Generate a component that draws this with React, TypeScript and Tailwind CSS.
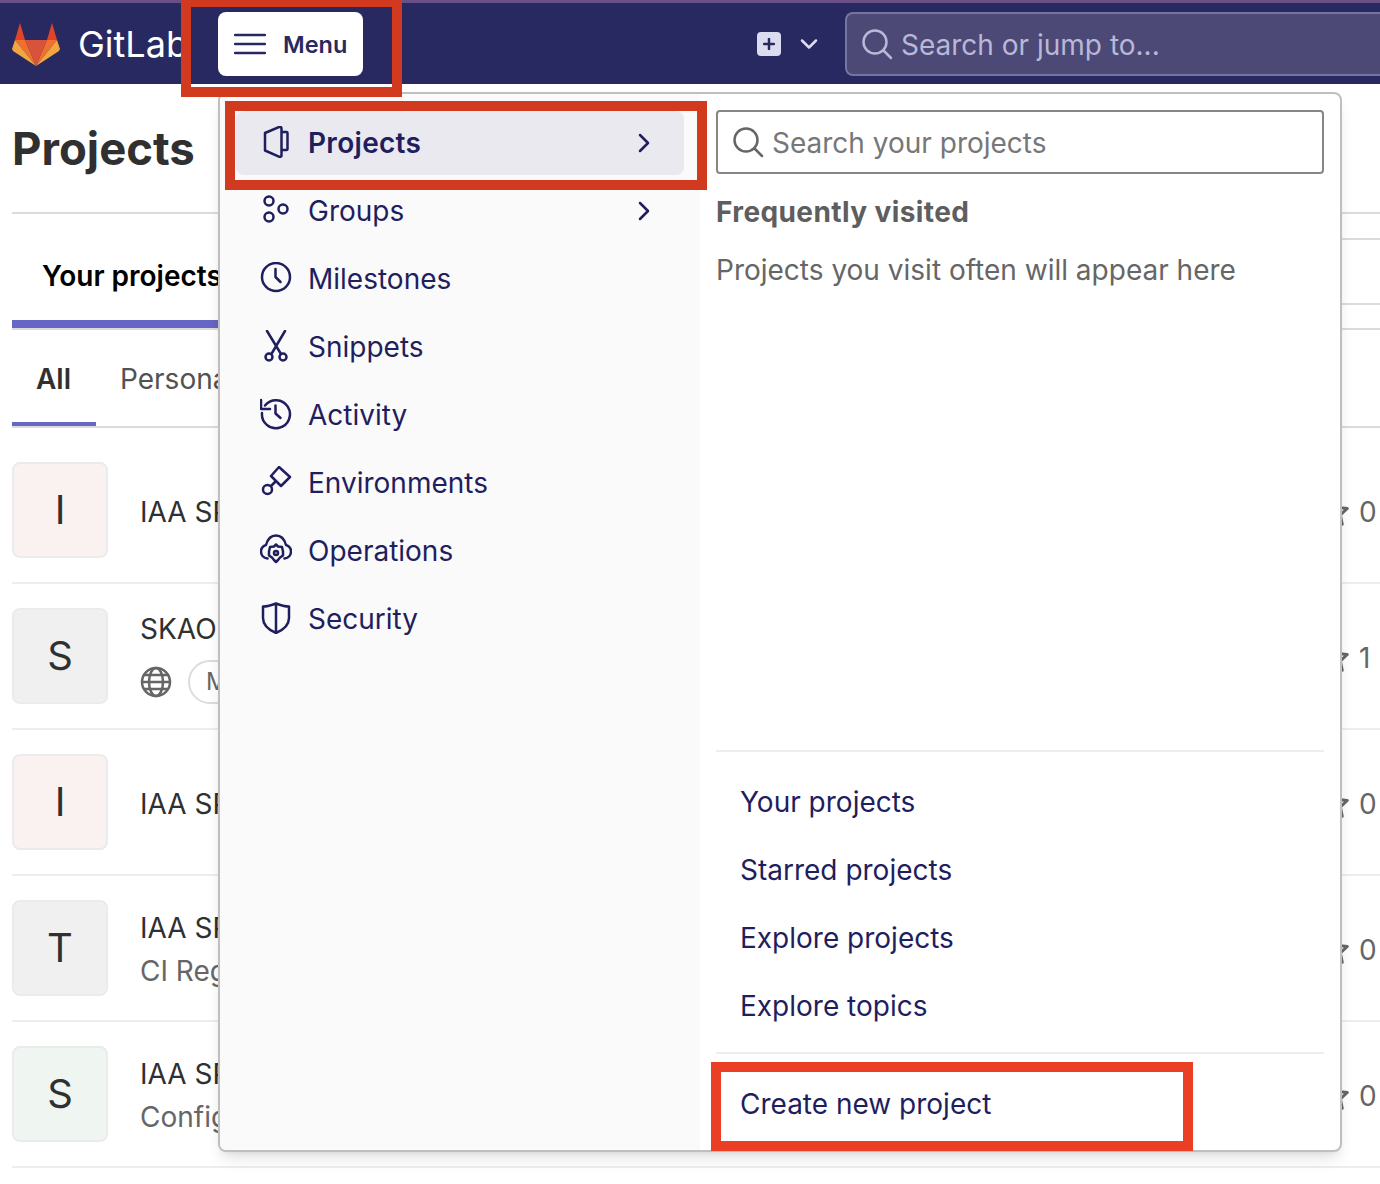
import { ReactNode } from 'react';

const FONT = "font-['Inter','Liberation_Sans',sans-serif]";

function Glyph({ children, className = '' }: { children: ReactNode; className?: string }) {
  return (
    <svg
      viewBox="0 0 32 32"
      fill="none"
      stroke="currentColor"
      strokeWidth={2.5}
      strokeLinecap="round"
      strokeLinejoin="round"
      className={`w-8 h-8 shrink-0 ${className}`}
    >
      {children}
    </svg>
  );
}

function Tanuki() {
  return (
    <svg viewBox="0 0 48 44" className="w-12 h-11 shrink-0">
      <polygon points="8,0 3,17 13,17" fill="#e24329" />
      <polygon points="40,0 45,17 35,17" fill="#e24329" />
      <polygon points="13,17 35,17 24,43" fill="#d9533a" />
      <polygon points="3,17 13,17 24,43" fill="#f0702f" />
      <polygon points="45,17 35,17 24,43" fill="#f0702f" />
      <polygon points="3,17 0,26 1,28 24,43" fill="#f3a640" />
      <polygon points="45,17 48,26 47,28 24,43" fill="#f3a640" />
    </svg>
  );
}

const navIcons: Record<string, ReactNode> = {
  Projects: <path d="M5 7 19.5 0.8c1.600 0 2 1 2 1.600v27c0 .8-.6 1.600-2 1.400L5 24.500ZM21.500 6H26.500c.6 0 1 .5 1 1v16c0 .6-.4 1-1 1H21.500" />,
  Groups: (
    <>
      <circle cx="9" cy="7" r="4.500" />
      <circle cx="9" cy="23" r="4.500" />
      <circle cx="23" cy="15" r="4.500" />
    </>
  ),
  Milestones: (
    <>
      <circle cx="16" cy="15" r="14" />
      <path d="M15.500 7v8l5 5" />
    </>
  ),
  Snippets: (
    <>
      <path d="M7 1 21 24M25 1 12 23" />
      <circle cx="9" cy="27" r="3.500" />
      <circle cx="23" cy="27" r="3.500" />
    </>
  ),
  Activity: (
    <>
      <path d="M5 7.500A14 14 0 1 1 2 15" />
      <path d="M1 2v9h9" />
      <path d="M15.500 7.500v8l5 4.500" />
    </>
  ),
  Environments: (
    <>
      <path d="M19 1 30 11 21 20 11 10Z" />
      <circle cx="7.500" cy="23.500" r="4.500" />
      <path d="M11 20 15 16" />
    </>
  ),
  Operations: (
    <>
      <path d="M7.500 24.500C3.500 24 1 21 1 17.500 1 14.500 3 12 6 11 7.500 5.500 11 1.500 16 1.500s8.500 4 10 9.500c3 1 5 3.500 5 6.500 0 3.500-2.500 6.500-6.500 7" />
      <path d="M16 10.500 18 12.500 22 13 23 17.500 23 21.500 20 23.500 18 26 16 28 14 26 12 23.500 9 21.500 9 17.500 10 13 14 12.500Z" />
      <circle cx="16" cy="19" r="2" />
    </>
  ),
  Security: <path d="M16 1.500C11 3.500 7 4.500 3 4.500V16c0 7 6 12 13 15 7-3 13-8 13-15V4.500c-4 0-8-1-13-3ZM16 1.500V31" />,
};

const navItems = ['Projects', 'Groups', 'Milestones', 'Snippets', 'Activity', 'Environments', 'Operations', 'Security'];
const hasChevron = ['Projects', 'Groups'];

function NavItem({ label }: { label: string }) {
  const active = label === 'Projects';
  return (
    <div className={`h-16 mb-1 ml-4 mr-4 rounded-lg flex items-center pl-6 pr-[34px] ${active ? 'bg-[#e9e9ef] font-semibold tracking-[0.3px]' : ''}`}>
      <Glyph className="-translate-y-px">{navIcons[label]}</Glyph>
      <span className="ml-4 flex-1">{label}</span>
      {hasChevron.includes(label) && (
        <svg viewBox="0 0 12 20" className="w-3 h-5" fill="none" stroke="currentColor" strokeWidth={2.5} strokeLinecap="round" strokeLinejoin="round">
          <path d="M2 2l8 8-8 8" />
        </svg>
      )}
    </div>
  );
}

function Search({ className = '' }: { className?: string }) {
  return (
    <svg viewBox="0 0 32 32" fill="none" stroke="currentColor" strokeWidth={2.5} strokeLinecap="round" className={`w-8 h-8 shrink-0 ${className}`}>
      <circle cx="14" cy="14" r="11.500" />
      <path d="M22.500 22.500 30 30" />
    </svg>
  );
}

type Row = { letter: string; tint: string; name: string; sub?: string; pill?: boolean; stars: number };

const rows: Row[] = [
  { letter: 'I', tint: 'bg-[#faf2f0]', name: 'IAA SPSRC / Infrastructure', stars: 0 },
  { letter: 'S', tint: 'bg-[#f0f0f0]', name: 'SKAO / Maintainer', pill: true, stars: 1 },
  { letter: 'I', tint: 'bg-[#faf2f0]', name: 'IAA SPSRC / Deployments', stars: 0 },
  { letter: 'T', tint: 'bg-[#f0f0f0]', name: 'IAA SPSRC / Test', sub: 'CI Registry images', stars: 0 },
  { letter: 'S', tint: 'bg-[#eff5f0]', name: 'IAA SPSRC / Services', sub: 'Configuration files', stars: 0 },
];

function ProjectRow({ row }: { row: Row }) {
  return (
    <div className="h-[146px] pt-6 border-b-2 border-[#ededed] flex items-start">
      <div className={`w-24 h-24 rounded-lg border-2 border-[#ebebeb] flex items-center justify-center text-[40px] leading-none text-[#303030] ${row.tint}`}>
        {row.letter}
      </div>
      <div className="ml-8 h-24 pt-[3px] flex flex-col justify-center text-[#303030] leading-9">
        <div>{row.name}</div>
        {row.sub && <div className="mt-[7px] text-[#666666]">{row.sub}</div>}
        {row.pill && (
          <div className="mt-[13px] flex items-center h-12">
            <svg viewBox="0 0 32 32" fill="none" stroke="#666666" strokeWidth={2.5} className="w-8 h-8">
              <circle cx="16" cy="16" r="14" />
              <ellipse cx="16" cy="16" rx="7" ry="14" />
              <path d="M2 16h28M4 9h24M4 23h24" />
            </svg>
            <span className="ml-4 h-11 px-4 border-2 border-[#dcdcdc] rounded-full flex items-center text-2xl text-[#666666]">Maintainer</span>
          </div>
        )}
      </div>
      <div className="ml-auto h-24 pt-[3px] pr-1 flex items-center text-[#666666]">
        <svg viewBox="0 0 24 24" fill="none" stroke="#666666" strokeWidth={2.2} strokeLinejoin="round" className="w-8 h-8">
          <path d="M12 2l3 6.600 7 .8-5.200 4.800 1.400 7L12 17.600l-6.200 3.600 1.400-7L2 9.400l7-.8z" />
        </svg>
        <span className="ml-[9px] w-[17px]">{row.stars}</span>
      </div>
    </div>
  );
}

export default function App() {
  return (
    <div className={`relative w-[1380px] h-[1184px] overflow-hidden bg-white text-[28px] ${FONT}`}>
      {/* top bar */}
      <header className="h-[84px] bg-[#292961] border-t-[3px] border-[#6b4f87] flex items-center pt-px">
        <div className="ml-3 translate-y-[1px]">
          <Tanuki />
        </div>
        <span className="ml-[18px] text-[36px] text-white leading-none w-[103px] whitespace-nowrap">GitLab</span>
        <button className="ml-[37px] w-[145px] h-16 bg-white rounded-lg flex items-center pl-4 text-[#292961] text-[23.5px] font-semibold">
          <svg viewBox="0 0 32 32" fill="none" stroke="currentColor" strokeWidth={2.5} strokeLinecap="round" className="w-8 h-8">
            <path d="M1 7h30M1 16h30M1 25h30" />
          </svg>
          <span className="ml-[17px] pt-0.5">Menu</span>
        </button>
        <div className="ml-[394px] w-6 h-6 rounded bg-[#dcdcf0] flex items-center justify-center">
          <svg viewBox="0 0 12 12" stroke="#292961" strokeWidth={2.5} strokeLinecap="round" className="w-3 h-3">
            <path d="M6 1v10M1 6h10" />
          </svg>
        </div>
        <svg viewBox="0 0 18 12" fill="none" stroke="#dcdcf0" strokeWidth={2.5} strokeLinecap="round" strokeLinejoin="round" className="ml-[19px] w-[18px] h-3">
          <path d="M2 2.500l7 7 7-7" />
        </svg>
        <div className="ml-[27px] flex-1 h-16 rounded-l-lg bg-[#4c4977] border-2 border-r-0 border-[#77759f] flex items-center pl-[14px] text-[#b9b8d6]">
          <Search />
          <span className="ml-[8px] pt-px">Search or jump to...</span>
        </div>
      </header>

      {/* page behind the menu */}
      <main className="pl-3 pt-[2px] text-[#303030]">
        <h1 className="h-[128px] border-b-2 border-[#dbdbdb] flex items-center text-[45.5px] font-bold">Projects</h1>
        <div className="h-[116px] flex items-center border-b-2 border-[#dbdbdb]">
          <div className="h-full w-[206px] border-b-[8px] border-[#6666c4] pl-[30px] pt-[18px] flex items-center font-semibold text-black whitespace-nowrap">
            Your projects
          </div>
          <div className="ml-auto w-[500px] h-[67px] border-y-2 border-[#dbdbdb]" />
        </div>
        <div className="h-[98px] flex items-stretch border-b-2 border-[#dbdbdb]">
          <div className="w-[84px] border-b-4 border-[#6666c4] pl-6 pt-[6px] flex items-center font-semibold">All</div>
          <div className="ml-6 pt-[2px] flex items-center text-[#525252]">Personal</div>
        </div>
        <div className="mt-[10px]">
          {rows.map((row, i) => (
            <ProjectRow key={i} row={row} />
          ))}
        </div>
      </main>

      {/* menu dropdown */}
      <div className="absolute left-[218px] top-[92px] w-[1124px] h-[1060px] bg-white border-2 border-[#bfbfbf] rounded-lg shadow-lg flex overflow-hidden text-[#1f1e5e]">
        <nav className="w-[480px] bg-[#fafafa] pt-[17px]">
          {navItems.map(label => (
            <NavItem key={label} label={label} />
          ))}
        </nav>
        <div className="flex-1 pl-4 pr-4 pt-4 flex flex-col">
          <div className="h-16 border-2 border-[#868686] rounded flex items-center pl-[14px] text-[#868686]">
            <Search className="text-[#666666]" />
            <span className="ml-[8px] pt-px text-[#777777]">Search your projects</span>
          </div>
          <div className="mt-5 font-bold tracking-[0.4px] text-[#5e5e5e] leading-9">Frequently visited</div>
          <div className="mt-[22px] text-[#666666] leading-9">Projects you visit often will appear here</div>
          <div className="mt-[462px] border-t-2 border-[#ededed] pt-[16px]">
            {['Your projects', 'Starred projects', 'Explore projects', 'Explore topics'].map(link => (
              <div key={link} className="h-[68px] pl-6 flex items-center">{link}</div>
            ))}
          </div>
          <div className="mt-[12px] border-t-2 border-[#ededed] pl-6 pt-8 leading-9">Create new project</div>
        </div>
      </div>

      {/* annotation boxes */}
      <div className="absolute left-[181px] -top-[3px] w-[221px] h-[100px] border-[10px] border-[#d13a1f]" />
      <div className="absolute left-[225px] top-[101px] w-[482px] h-[89px] border-[10px] border-[#d13a1f]" />
      <div className="absolute left-[711px] top-[1062px] w-[482px] h-[89px] border-[10px] border-[#ea3f24]" />
    </div>
  );
}
